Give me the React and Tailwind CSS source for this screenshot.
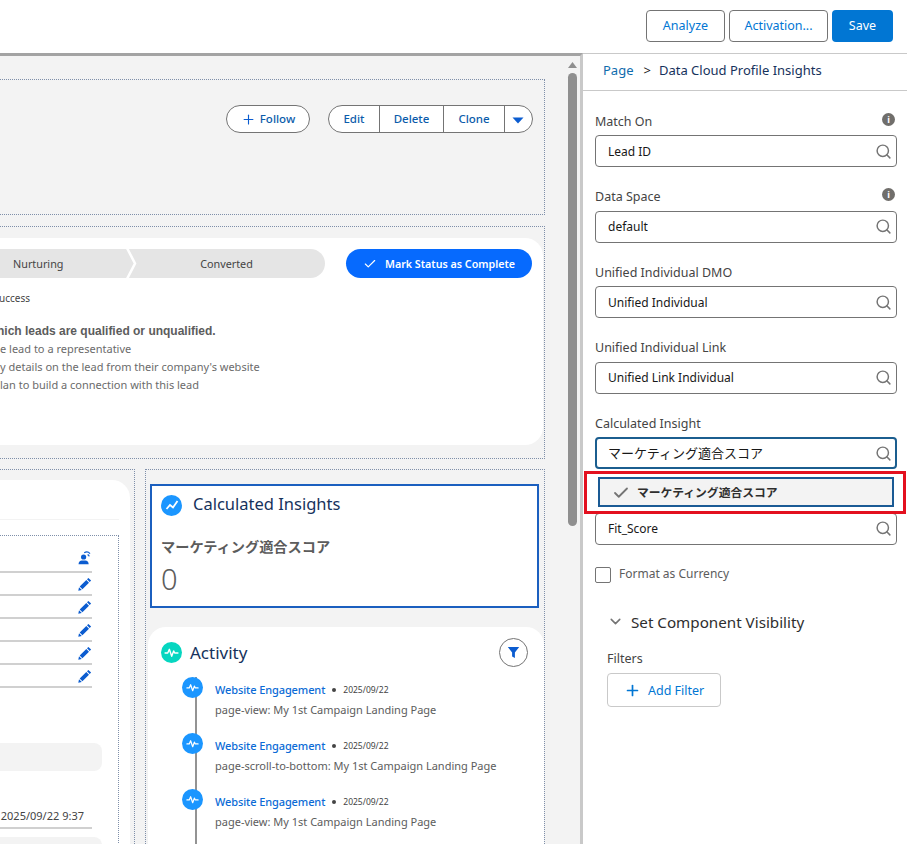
import React from "react";
import { Search, Plus, Check, ChevronDown } from "lucide-react";

const fontStack = "font-['Noto_Sans','Noto_Sans_CJK_JP',sans-serif]";

const Pencil = () => (
  <svg width="14" height="14" viewBox="0 0 14 14" fill="#0b5cd0">
    <path d="M10.4 0.9l2.7 2.7-1.4 1.4-2.7-2.7zM8.3 3l2.7 2.7-6.6 6.6-2.7-2.7zM1 10.2l2.8 2.8-3.5 0.8z" />
  </svg>
);

const OwnerIcon = () => (
  <svg width="14" height="14" viewBox="0 0 14 14" fill="#0b5cd0">
    <circle cx="5.6" cy="6" r="2.6" />
    <path d="M0.5 13.2c0-2.2 1.6-3.4 3.3-3.6h3.6c1.7 0.2 3.3 1.4 3.3 3.6z" />
    <path d="M6.2 1.8c2-1.2 4.4-0.8 5.8 0.8M9.6 3.6c0.8 0.3 1.4 0.9 1.6 1.7" fill="none" stroke="#0b5cd0" strokeWidth="1.2" />
  </svg>
);

const InfoDot = () => (
  <span className="flex h-[13px] w-[13px] -translate-y-[3px] items-center justify-center rounded-full bg-[#706e6b] text-[9px] font-bold leading-none text-white">
    i
  </span>
);

const Wave = ({ size = 14 }) => (
  <svg width={size} height={size} viewBox="0 0 14 14" fill="none" stroke="white" strokeWidth="1.3" strokeLinejoin="round" strokeLinecap="round">
    <path d="M1 7.5h2.5l1.5-3.5 2.2 6.5 1.8-5 1 2h3" />
  </svg>
);

function LookupField({ label, value, info }) {
  return (
    <div className="h-[75.6px]">
      <div className="mb-[5px] flex h-[18px] items-center justify-between pr-[2px] pt-[2px] text-[12.5px] text-[#444444]">
        <span>{label}</span>
        {info && <InfoDot />}
      </div>
      <SearchInput value={value} />
    </div>
  );
}

function SearchInput({ value, focused }) {
  return (
    <div
      className={`flex h-[32px] items-center justify-between rounded-[4px] bg-white ${
        focused ? "border-2 border-[#1b5e8f] pl-[11px] pr-[3px] text-[13px]" : "border border-[#747474] pl-[12px] pr-[4px] text-[12px]"
      } text-[#181818]`}
    >
      <span className="truncate pt-[1px]">{value}</span>
      <Search size={17} strokeWidth={2.1} className="text-[#747474]" />
    </div>
  );
}

function ActivityItem({ text }) {
  return (
    <div className="relative flex h-[56px] gap-[12px] pl-[34px]">
      <div className="absolute bottom-0 left-[47px] top-0 w-[2px] bg-[#939393]" />
      <div className="relative z-10 flex h-[21px] w-[21px] shrink-0 items-center justify-center rounded-full bg-[#1b96ff]">
        <Wave size={13} />
      </div>
      <div className="min-w-0 pt-[1px]">
        <div className="flex h-[24px] items-center">
          <span className="text-[11px] font-medium tracking-[-0.1px] text-[#0b6bd6]">Website Engagement</span>
          <span className="ml-[7px] h-[4px] w-[4px] rounded-full bg-[#444444]" />
          <span className="ml-[7px] text-[8.5px] text-[#444444]">2025/09/22</span>
        </div>
        <div className="text-[11px] leading-[16px] text-[#5c5c5c]">{text}</div>
      </div>
    </div>
  );
}

export default function App() {
  return (
    <div className={`flex h-[844px] w-[907px] flex-col overflow-hidden bg-white ${fontStack}`}>
      {/* Top bar */}
      <div className="flex h-[53px] shrink-0 items-center justify-end gap-[4px] pb-[1px] pr-[14px] text-[12.5px]">
        <button className="h-[32px] w-[79px] rounded-[4px] border border-[#747474] bg-white pt-[1px] text-[#0176d3]">Analyze</button>
        <button className="h-[32px] w-[99px] rounded-[4px] border border-[#747474] bg-white pt-[1px] text-[#0176d3]">Activation...</button>
        <button className="h-[32px] w-[61px] rounded-[4px] bg-[#0176d3] pt-[1px] text-white">Save</button>
      </div>

      <div className="flex min-h-0 flex-1">
        {/* Canvas */}
        <div className="flex w-[583px] shrink-0 overflow-hidden border-r-[3px] border-t-[3px] border-r-[#c9c9c9] border-t-[#a3a3a3] bg-[#f3f3f3]">
          <div className="flex w-[565px] shrink-0 flex-col pr-[20px] pt-[23px]">
            {/* Highlights panel */}
            <div className="flex h-[136px] shrink-0 justify-end gap-[18px] border-b border-r border-t border-dotted border-[#7f8fa9] pr-[11px] pt-[25px] text-[11.5px] font-medium text-[#0b5cab]">
              <button className="flex h-[28px] w-[84px] items-center justify-center gap-[4px] rounded-full border border-[#747474] bg-white">
                <Plus size={15} strokeWidth={1.8} className="text-[#0b5cd0]" />
                Follow
              </button>
              <div className="flex h-[28px] w-[205px] items-stretch rounded-full border border-[#747474] bg-white">
                <span className="flex w-[51px] items-center justify-center border-r border-[#747474]">Edit</span>
                <span className="flex w-[64px] items-center justify-center border-r border-[#747474]">Delete</span>
                <span className="flex w-[61px] items-center justify-center border-r border-[#747474]">Clone</span>
                <span className="flex flex-1 items-center justify-center pr-[2px] pt-[3px]">
                  <svg width="12" height="7" viewBox="0 0 12 7" fill="#0b5cd0">
                    <path d="M0.5 0.5h11L6 6.5z" />
                  </svg>
                </span>
              </div>
            </div>

            {/* Path panel */}
            <div className="mt-[11px] h-[233px] shrink-0 border-b border-r border-t border-dotted border-[#7f8fa9] pt-[11px]">
              <div className="h-[207px] w-[543px] rounded-r-[18px] bg-white pt-[11px]">
                <div className="flex items-center gap-[21px] pr-[11px]">
                  <div className="relative flex h-[29px] flex-1 items-center rounded-r-full bg-[#e5e5e5] pt-[1px] text-[10.8px] text-[#444444]">
                    <span className="w-[130px] pl-[13px]">Nurturing</span>
                    <span className="flex-1 pr-[2px] text-center">Converted</span>
                    <svg className="absolute left-[125px] top-0" width="12" height="29" viewBox="0 0 12 29" fill="none" stroke="white" strokeWidth="2.5">
                      <path d="M2 -1l8 15.5L2 30" />
                    </svg>
                  </div>
                  <button className="flex h-[29px] w-[186px] items-center justify-center gap-[8px] rounded-full bg-[#066afe] pt-[1px] text-[10.7px] font-semibold text-white">
                    <Check size={14} strokeWidth={2} />
                    Mark Status as Complete
                  </button>
                </div>
                <p className="-ml-[1px] mt-[11px] h-[18px] text-[10px] leading-[18px] text-[#444444]">uccess</p>
                <div className="mt-[15px] overflow-hidden text-[11px] leading-[18px] text-[#6b6b6b]">
                  <p className="-ml-[3px] font-['Liberation_Sans',sans-serif] text-[12px] font-bold text-[#5c5c5c]">hich leads are qualified or unqualified.</p>
                  <p>e lead to a representative</p>
                  <p>y details on the lead from their company's website</p>
                  <p>lan to build a connection with this lead</p>
                </div>
              </div>
            </div>

            {/* Lower columns */}
            <div className="mt-[10px] flex min-h-0 flex-1 gap-[10px]">
              <div className="flex w-[135px] shrink-0 flex-col border-r border-t border-dotted border-[#7f8fa9] pt-[10px]">
                <div className="w-[130px] flex-1 rounded-tr-[18px] bg-white">
                  <div className="h-[40px] w-[119px] border-b border-[#f3f3f3]" />
                  <div className="ml-0 mt-[15px] h-[400px] w-[119px] border-r border-t border-dotted border-[#7f8fa9]">
                    <div className="w-[92px]">
                      <div className="flex h-[37px] items-end justify-end border-b-2 border-[#d0d0d0] pb-[6px]">
                        <OwnerIcon />
                      </div>
                      {[0, 1, 2, 3, 4].map((i) => (
                        <div key={i} className="flex h-[23px] items-center justify-end border-b-2 border-[#d0d0d0]">
                          <Pencil />
                        </div>
                      ))}
                    </div>
                    <div className="mt-[55px] h-[28px] w-[102px] rounded-r-[8px] bg-[#f3f3f3]" />
                    <div className="mt-[34px] flex h-[24px] w-[92px] items-center justify-end border-b-2 border-[#d0d0d0] pr-[8px] text-[11px] text-[#444444]">
                      <span className="whitespace-nowrap">2025/09/22 9:37</span>
                    </div>
                    <div className="mt-[8px] h-[28px] w-[102px] rounded-r-[8px] bg-[#f3f3f3]" />
                  </div>
                </div>
              </div>

              <div className="flex w-[400px] shrink-0 flex-col border-l border-r border-t border-dotted border-[#7f8fa9] pt-[14px]">
                <div className="ml-[4px] mr-[5px] h-[124px] shrink-0 border-2 border-[#1b5fbf] bg-white pl-[9px] pt-[6px]">
                  <div className="flex items-center gap-[11px]">
                    <div className="flex h-[21px] w-[21px] items-center justify-center rounded-full bg-[#1b96ff]">
                      <svg width="14" height="14" viewBox="0 0 14 14" fill="none" stroke="white" strokeWidth="1.8">
                        <path d="M1.5 11l3.5-4 3 2.5L12.5 3" />
                      </svg>
                    </div>
                    <span className="pb-[2px] text-[16.5px] leading-[24px] text-[#16325c]">Calculated Insights</span>
                  </div>
                  <div className="mt-[19px] text-[14.2px] font-bold leading-[20px] text-[#5c5c5c]">マーケティング適合スコア</div>
                  <div className="mt-[3px] text-[29px] font-light leading-[38px] text-[#5c5c5c]">0</div>
                </div>

                <div className="ml-[2px] mt-[19px] flex-1 rounded-t-[18px] bg-white">
                  <div className="flex h-[50px] items-center justify-between pl-[13px] pr-[16px]">
                    <div className="flex items-center gap-[8px]">
                      <div className="flex h-[21px] w-[21px] items-center justify-center rounded-full bg-[#06d6c0]">
                        <Wave size={15} />
                      </div>
                      <span className="pt-[1px] text-[17px] leading-[26px] text-[#16325c]">Activity</span>
                    </div>
                    <button className="flex h-[29px] w-[29px] items-center justify-center rounded-full border border-[#747474] bg-white">
                      <svg width="13" height="13" viewBox="0 0 13 13" fill="#0b5cd0">
                        <path d="M0.8 1h11.4L7.9 6.6V12L5.1 10.4V6.6z" />
                      </svg>
                    </button>
                  </div>
                  <ActivityItem text="page-view: My 1st Campaign Landing Page" />
                  <ActivityItem text="page-scroll-to-bottom: My 1st Campaign Landing Page" />
                  <ActivityItem text="page-view: My 1st Campaign Landing Page" />
                </div>
              </div>
            </div>
          </div>

          {/* Scrollbar */}
          <div className="flex w-[15px] shrink-0 flex-col items-center pt-[6px]">
            <svg width="9" height="6" viewBox="0 0 9 6" fill="#8f8f8f">
              <path d="M4.5 0L9 6H0z" />
            </svg>
            <div className="mt-[5px] h-[453px] w-[9px] rounded-full bg-[#8f8f8f]" />
          </div>
        </div>

        {/* Properties panel */}
        <div className="min-w-0 flex-1 border-t border-[#c9c9c9]">
          <div className="flex h-[37px] items-center border-b border-[#c9c9c9] pb-[2px] pl-[20px] text-[13px]">
            <span className="text-[#0f6cad]">Page</span>
            <span className="ml-[10px] mr-[8px] text-[#181818]">&gt;</span>
            <span className="text-[#16325c]">Data Cloud Profile Insights</span>
          </div>
          <div className="pl-[12px] pr-[10px] pt-[21px]">
            <LookupField label="Match On" value="Lead ID" info />
            <LookupField label="Data Space" value="default" info />
            <LookupField label="Unified Individual DMO" value="Unified Individual" />
            <LookupField label="Unified Individual Link" value="Unified Link Individual" />

            <div className="relative h-[75.6px]">
              <div className="mb-[5px] flex h-[18px] items-center pt-[2px] text-[12.5px] text-[#444444]">Calculated Insight</div>
              <SearchInput value="マーケティング適合スコア" focused />
              {/* Open dropdown with the highlight around it */}
              <div className="absolute -left-[11px] -right-[9px] top-[57px] z-20 h-[43px] border-[3px] border-[#e3101f] bg-white pl-[11px] pr-[9px] pt-[3px]">
                <div className="flex h-[30px] items-center gap-[7px] border-2 border-[#1a5a94] bg-[#f3f3f3] pl-[12px] pt-[1px] text-[11.8px] font-bold text-[#2e2e2e]">
                  <Check size={18} strokeWidth={2.4} className="text-[#747474]" />
                  マーケティング適合スコア
                </div>
              </div>
            </div>

            {/* label of this field sits under the dropdown */}
            <div className="pt-[23px]">
              <SearchInput value="Fit_Score" />
            </div>

            <label className="mt-[20px] flex items-center gap-[8px] text-[12px] text-[#5c5c5c]">
              <span className="h-[16px] w-[16px] rounded-[2px] border border-[#747474] bg-white" />
              <span className="pb-[2px]">Format as Currency</span>
            </label>

            <div className="ml-[12px] mt-[25px] flex h-[24px] items-center gap-[7px] text-[15.2px] text-[#2e2e2e]">
              <ChevronDown size={17} strokeWidth={2.2} className="text-[#747474]" />
              Set Component Visibility
            </div>
            <div className="ml-[12px] mt-[16px] h-[18px] text-[12.5px] leading-[18px] text-[#444444]">Filters</div>
            <button className="ml-[12px] mt-[5px] flex h-[34px] w-[114px] items-center gap-[7px] rounded-[4px] border border-[#c9c9c9] bg-white pl-[16px] pt-[2px] text-[12.5px] text-[#0176d3]">
              <Plus size={17} strokeWidth={2.4} />
              Add Filter
            </button>
          </div>
        </div>
      </div>
    </div>
  );
}
